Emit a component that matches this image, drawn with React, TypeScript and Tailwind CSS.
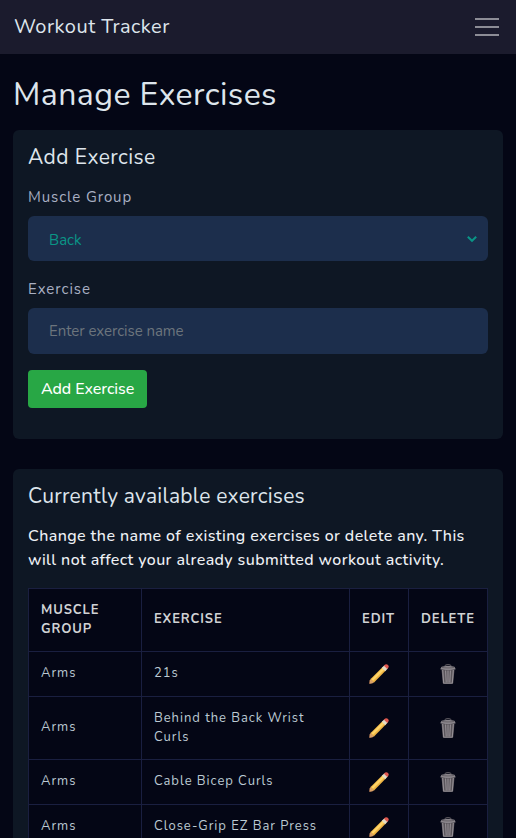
const exercises = [
  { group: 'Arms', name: '21s' },
  { group: 'Arms', name: 'Behind the Back Wrist Curls' },
  { group: 'Arms', name: 'Cable Bicep Curls' },
  { group: 'Arms', name: 'Close-Grip EZ Bar Press' },
];

function Pencil() {
  return (
    <svg className="block size-5" viewBox="0 0 20 20" fill="none">
      <path d="M0.2 19.8L0.9 16.2L3.9 19.1Z" fill="#a5624a" />
      <path d="M0.7 16.6L2 14.6L5.4 18L3.6 19.3L0.5 19.7Z" fill="#d9a066" />
      <path d="M1.6 15.1L13.4 3.2L16.8 6.6L5 18.4Z" fill="#efb443" />
      <path d="M2.5 15.2L13.9 3.8L15.5 5.4L4.1 16.8Z" fill="#ffd568" />
      <path d="M12.8 3.8L15.4 1.2L18.8 4.6L16.2 7.2Z" fill="#e3dcc4" />
      <path d="M14.9 1.7C16.2 0.1 17.9 0 19 1C20.1 2.1 19.9 3.8 18.3 5.1Z" fill="#e0584f" />
    </svg>
  );
}

function Trash() {
  return (
    <svg className="block h-5 w-4" viewBox="0 0 16 20" fill="none">
      <path d="M4.6 1.8C5.5 0.3 10.5 0.3 11.4 1.8" stroke="#6d686d" strokeWidth="1" />
      <path d="M1.5 5.5H14.5L13.2 19.2C11 20 5 20 2.8 19.2Z" fill="#5a555b" />
      <path d="M2.7 6L3.7 19M5.6 6.5L6.2 18.5M8 6.5V18.5M10.4 6.5L9.8 18.5M13.3 6L12.3 19" stroke="#969096" strokeWidth="1.1" />
      <path d="M3.2 19.2H12.8" stroke="#969096" strokeWidth="1" />
      <path d="M1.6 2.8C4 1.8 12 1.8 14.4 2.8L15.8 5.2C13 6.3 3 6.3 0.2 5.2Z" fill="#8a858b" />
      <path d="M2 3.4C5 4.1 11 4.1 14 3.4" stroke="#5e595f" strokeWidth="0.8" />
    </svg>
  );
}

const cell = 'border border-[#1a1f40] px-3 align-middle';

export default function App() {
  return (
    <div className="h-[838px] overflow-hidden bg-[#040615] font-['Nunito','Inter',sans-serif] text-[#dee5ec]">
      <nav className="flex h-[54px] items-center justify-between bg-[#1b1b2d] px-[14px]">
        <span className="text-[20px] leading-[30px] tracking-[0.5px]">Workout Tracker</span>
        <button className="flex size-[30px] items-center justify-center" aria-label="Menu">
          <svg className="size-[30px]" viewBox="0 0 30 30" stroke="#8d8d96" strokeWidth="2">
            <path d="M3 7h24M3 15h24M3 23h24" />
          </svg>
        </button>
      </nav>

      <main className="px-[13px] pt-[22px]">
        <h1 className="text-[32px] leading-[38px] tracking-[0.44px]">Manage Exercises</h1>

        <section className="mt-4 h-[309px] rounded-[6px] bg-[#0e1724] px-[15px] pt-[14px]">
          <h2 className="text-[21px] leading-[26px] tracking-[0.42px]">Add Exercise</h2>
          <label className="mt-4 block h-[23px] text-[15px] leading-[23px] tracking-[0.9px] text-[#a9b0c3]">Muscle Group</label>
          <div className="mt-[7px] flex h-[45px] items-center justify-between rounded-[6px] bg-[#1c2e4c] pr-[10px] pl-[21px] text-[15px] text-[#0a9586]">
            <span className="pt-[3px]">Back</span>
            <svg className="h-[8px] w-[12px]" viewBox="0 0 12 8" fill="none" stroke="#0a9586" strokeWidth="2">
              <path d="M1.8 1.8L6 5.8L10.2 1.8" />
            </svg>
          </div>
          <label className="mt-[17px] block h-[22px] text-[15px] leading-[22px] tracking-[0.95px] text-[#a9b0c3]">Exercise</label>
          <input
            className="mt-2 block h-[46px] w-full rounded-[6px] bg-[#1c2e4c] px-[21px] text-[15px] tracking-[-0.04px] outline-none placeholder:text-[#6c757d]"
            placeholder="Enter exercise name"
          />
          <button className="mt-4 flex h-[38px] w-[119px] items-center justify-center rounded-[4px] bg-[#28a745] text-[16px] leading-6 font-[500] tracking-[-0.07px] text-white">
            Add Exercise
          </button>
        </section>

        <section className="mt-[30px] rounded-[6px] bg-[#0e1724] px-[15px] pt-[14px]">
          <h2 className="text-[21px] leading-[26px] tracking-[0.25px]">Currently available exercises</h2>
          <p className="mt-[15px] text-[16px] leading-6 font-[500] tracking-[0.4px] text-[#eef1f5]">
            Change the name of existing exercises or delete any. This will not affect your already submitted workout activity.
          </p>
          <table className="mt-4 w-[460px] table-fixed border-collapse bg-[#040615] text-[13px] leading-[19px]">
            <colgroup>
              <col className="w-[113px]" />
              <col className="w-[208px]" />
              <col className="w-[59px]" />
              <col className="w-[79px]" />
            </colgroup>
            <thead>
              <tr className="h-[63px] text-left tracking-[0.88px] text-[#d0d2d4] uppercase">
                <th className={`${cell} font-bold`}>Muscle Group</th>
                <th className={`${cell} pb-0.5 font-bold`}>Exercise</th>
                <th className={`${cell} pb-0.5 font-bold`}>Edit</th>
                <th className={`${cell} pb-0.5 font-bold`}>Delete</th>
              </tr>
            </thead>
            <tbody className="tracking-[0.96px] text-[#bccad3]">
              {exercises.map((e) => {
                const wraps = e.name.length > 24;
                return (
                  <tr key={e.name} className={wraps ? 'h-[63px]' : 'h-[45px]'}>
                    <td className={`${cell} pb-0.5`}>{e.group}</td>
                    <td className={wraps ? cell : `${cell} pb-0.5`}>{e.name}</td>
                    <td className={cell}>
                      <div className="flex justify-center"><Pencil /></div>
                    </td>
                    <td className={cell}>
                      <div className="flex justify-center"><Trash /></div>
                    </td>
                  </tr>
                );
              })}
            </tbody>
          </table>
        </section>
      </main>
    </div>
  );
}
